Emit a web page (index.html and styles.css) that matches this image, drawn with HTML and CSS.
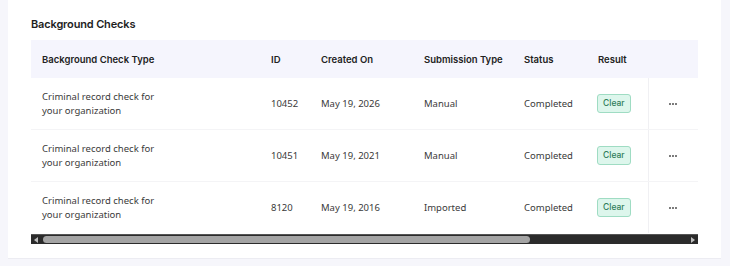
FILE: index.html
```html
<!DOCTYPE html>
<html>
<head>
<meta charset="utf-8">
<link rel="stylesheet" href="styles.css">
</head>
<body>
<div class="card">
  <h2 class="title">Background Checks</h2>
  <table class="grid">
    <colgroup>
      <col class="c1"><col class="c2"><col class="c3"><col class="c4"><col class="c5"><col class="c6"><col class="c7">
    </colgroup>
    <thead>
      <tr>
        <th>Background Check Type</th>
        <th>ID</th>
        <th>Created On</th>
        <th>Submission Type</th>
        <th>Status</th>
        <th>Result</th>
        <th class="act"></th>
      </tr>
    </thead>
    <tbody>
      <tr>
        <td>Criminal record check for<br>your organization</td>
        <td>10452</td>
        <td>May 19, 2026</td>
        <td>Manual</td>
        <td>Completed</td>
        <td><span class="badge">Clear</span></td>
        <td class="act"><svg class="dots" width="8" height="4" viewBox="0 0 8 4"><circle cx="1" cy="2" r="0.95"/><circle cx="4" cy="2" r="0.95"/><circle cx="7" cy="2" r="0.95"/></svg></td>
      </tr>
      <tr>
        <td>Criminal record check for<br>your organization</td>
        <td>10451</td>
        <td>May 19, 2021</td>
        <td>Manual</td>
        <td>Completed</td>
        <td><span class="badge">Clear</span></td>
        <td class="act"><svg class="dots" width="8" height="4" viewBox="0 0 8 4"><circle cx="1" cy="2" r="0.95"/><circle cx="4" cy="2" r="0.95"/><circle cx="7" cy="2" r="0.95"/></svg></td>
      </tr>
      <tr>
        <td>Criminal record check for<br>your organization</td>
        <td>8120</td>
        <td>May 19, 2016</td>
        <td>Imported</td>
        <td>Completed</td>
        <td><span class="badge">Clear</span></td>
        <td class="act"><svg class="dots" width="8" height="4" viewBox="0 0 8 4"><circle cx="1" cy="2" r="0.95"/><circle cx="4" cy="2" r="0.95"/><circle cx="7" cy="2" r="0.95"/></svg></td>
      </tr>
    </tbody>
  </table>
  <div class="scrollbar">
    <span class="arrow left"></span>
    <span class="thumb"></span>
    <span class="arrow right"></span>
  </div>
</div>
</body>
</html>
```

FILE: styles.css
```css
html, body {
  margin: 0;
  padding: 0;
  background: #f6f6fb;
}
body {
  font-family: "Noto Sans", "Liberation Sans", sans-serif;
  color: #3a3a3a;
}
.card {
  background: #ffffff;
  width: 713px;
  height: 259px;
  margin-left: 8px;
  box-sizing: border-box;
  padding: 16px 23px 0 23px;
  border-bottom: 1px solid #ececf2;
}
.title {
  margin: 0 0 8px 0;
  font-family: Inter, "Noto Sans", sans-serif;
  font-weight: 600;
  font-size: 11px;
  line-height: 16px;
  color: #1e1e1e;
  letter-spacing: -0.15px;
}
.grid {
  width: 667px;
  border-collapse: collapse;
  table-layout: fixed;
}
.c1 { width: 229px; }
.c2 { width: 50px; }
.c3 { width: 103px; }
.c4 { width: 100px; }
.c5 { width: 74px; }
.c6 { width: 61px; }
.c7 { width: 50px; }
th {
  background: #f5f5fd;
  height: 38px;
  padding: 0 0 0 11px;
  text-align: left;
  font-family: Inter, "Noto Sans", sans-serif;
  font-weight: 600;
  font-size: 9.5px;
  color: #222222;
}
td {
  height: 51px;
  padding: 0 0 0 11px;
  font-size: 9.5px;
  line-height: 14px;
  border-bottom: 1px solid #f4f4f6;
  vertical-align: middle;
}
tbody tr:last-child td {
  border-bottom: none;
}
td.act {
  border-left: 1px solid #f0f0f3;
  padding: 0;
  text-align: center;
}
.dots {
  display: inline-block;
  vertical-align: middle;
  fill: #444444;
}
.badge {
  display: inline-block;
  padding: 3px 5px;
  font-family: Inter, "Noto Sans", sans-serif;
  font-size: 8.5px;
  line-height: 11px;
  font-weight: 500;
  color: #2f7d5b;
  background: #ddf6ec;
  border: 1px solid #9fdcc3;
  border-radius: 3px;
  margin-left: -1px;
}
.scrollbar {
  margin-top: 1px;
  width: 667px;
  height: 10px;
  box-sizing: border-box;
  background: #2b2b2b;
  border-top: 1px solid #555;
  display: flex;
  align-items: center;
  padding: 0 3px;
}
.arrow {
  width: 0;
  height: 0;
  border-top: 3px solid transparent;
  border-bottom: 3px solid transparent;
}
.arrow.left {
  border-right: 4px solid #bdbdbd;
}
.arrow.right {
  border-left: 4px solid #bdbdbd;
  margin-left: auto;
}
.thumb {
  width: 487px;
  height: 7px;
  margin-left: 5px;
  background: #a4a4a4;
  border-radius: 4px;
}
```
